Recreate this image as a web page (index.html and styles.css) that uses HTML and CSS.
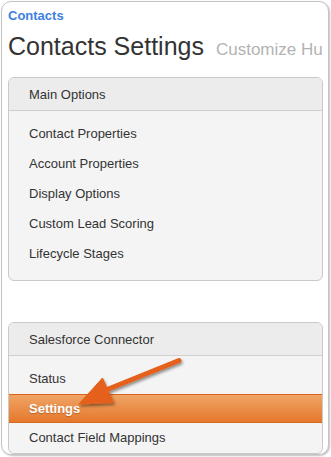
FILE: index.html
```html
<!DOCTYPE html>
<html lang="en">
<head>
    <meta charset="UTF-8">
    <meta name="viewport" content="width=device-width, initial-scale=1.0">
    <title>Contacts Settings</title>
    <link rel="stylesheet" href="styles.css">
</head>
<body>
    <div class="frame">
        <a href="#" class="crumb">Contacts</a>
        <div class="title">
            <h1>Contacts Settings</h1>
            <span class="subtitle">Customize HubSpot Contacts</span>
        </div>

        <div class="panel">
            <div class="panelHead">Main Options</div>
            <ul class="panelList">
                <li><a href="#">Contact Properties</a></li>
                <li><a href="#">Account Properties</a></li>
                <li><a href="#">Display Options</a></li>
                <li><a href="#">Custom Lead Scoring</a></li>
                <li><a href="#">Lifecycle Stages</a></li>
            </ul>
        </div>

        <div class="panel panel2">
            <div class="panelHead">Salesforce Connector</div>
            <ul class="panelList">
                <li><a href="#">Status</a></li>
                <li class="active"><a href="#">Settings</a></li>
                <li><a href="#">Contact Field Mappings</a></li>
            </ul>
        </div>
    </div>

    <!-- callout arrow pointing at the Settings row -->
    <svg class="arrow" width="331" height="457" viewBox="0 0 331 457">
        <defs>
            <filter id="shade" x="-20%" y="-20%" width="140%" height="140%">
                <feDropShadow dx="1" dy="2" stdDeviation="1.6" flood-color="#000" flood-opacity="0.45"/>
            </filter>
        </defs>
        <g filter="url(#shade)" fill="#e4601a" stroke="#e4601a">
            <line x1="179" y1="360.5" x2="106" y2="390" stroke-width="5" stroke-linecap="round"/>
            <polygon points="79,404 102.5,378 113.5,402.5" stroke-width="1" stroke-linejoin="round"/>
        </g>
    </svg>
</body>
</html>
```

FILE: styles.css
```css
*{
    margin: 0;
    padding: 0;
    list-style-type: none;
    box-sizing: border-box;
}
body{
    position: relative;
    width: 331px;
    height: 457px;
    overflow: hidden;
    background-color: white;
    font-family: "Liberation Sans", Arial, sans-serif;
}
.frame{
    margin: 1px 0 0 1px;
    width: 328px;
    height: 454px;
    padding: 6px 5px 0 6px;
    border: 1px solid #c4c4c4;
    border-radius: 10px;
    overflow: hidden;
    background-color: white;
    box-shadow: 1px 1px 2px rgba(0,0,0,0.25);
}
.crumb{
    display: block;
    height: 16px;
    line-height: 16px;
    font-size: 13px;
    font-weight: bold;
    color: #3c7fe1;
    text-decoration: none;
}
.title{
    display: flex;
    align-items: baseline;
    margin-top: 7px;
    height: 30px;
    white-space: nowrap;
    overflow: hidden;
}
.title h1{
    font-size: 25px;
    font-weight: normal;
    line-height: 30px;
    color: #333;
    margin-right: 12px;
}
.subtitle{
    font-size: 17px;
    color: #b3b3b3;
}
.panel{
    margin-top: 16px;
    border: 1px solid #c9c9c9;
    border-radius: 6px;
    background-color: #f4f4f4;
    overflow: hidden;
}
.panel2{
    margin-top: 41px;
}
.panelHead{
    height: 33px;
    line-height: 33px;
    padding-left: 20px;
    font-size: 13px;
    color: #333;
    background-color: #ececec;
    border-bottom: 1px solid #cfcfcf;
}
.panelList{
    padding: 8px 0 11px;
}
.panel2 .panelList{
    padding: 8px 0 0;
}
.panelList li{
    height: 30px;
    line-height: 30px;
}
.panelList a{
    display: block;
    padding-left: 20px;
    font-size: 13px;
    color: #333;
    text-decoration: none;
}
.panelList .active{
    height: 29px;
    line-height: 28px;
    border-top: 1px solid #d8641c;
    border-bottom: 1px solid #d56a24;
    background: linear-gradient(#efa466, #e5782c);
}
.panelList .active a{
    color: white;
    font-weight: bold;
    text-shadow: 0 1px 1px rgba(120,50,0,0.4);
}
.arrow{
    position: absolute;
    left: 0;
    top: 0;
    pointer-events: none;
}
```
